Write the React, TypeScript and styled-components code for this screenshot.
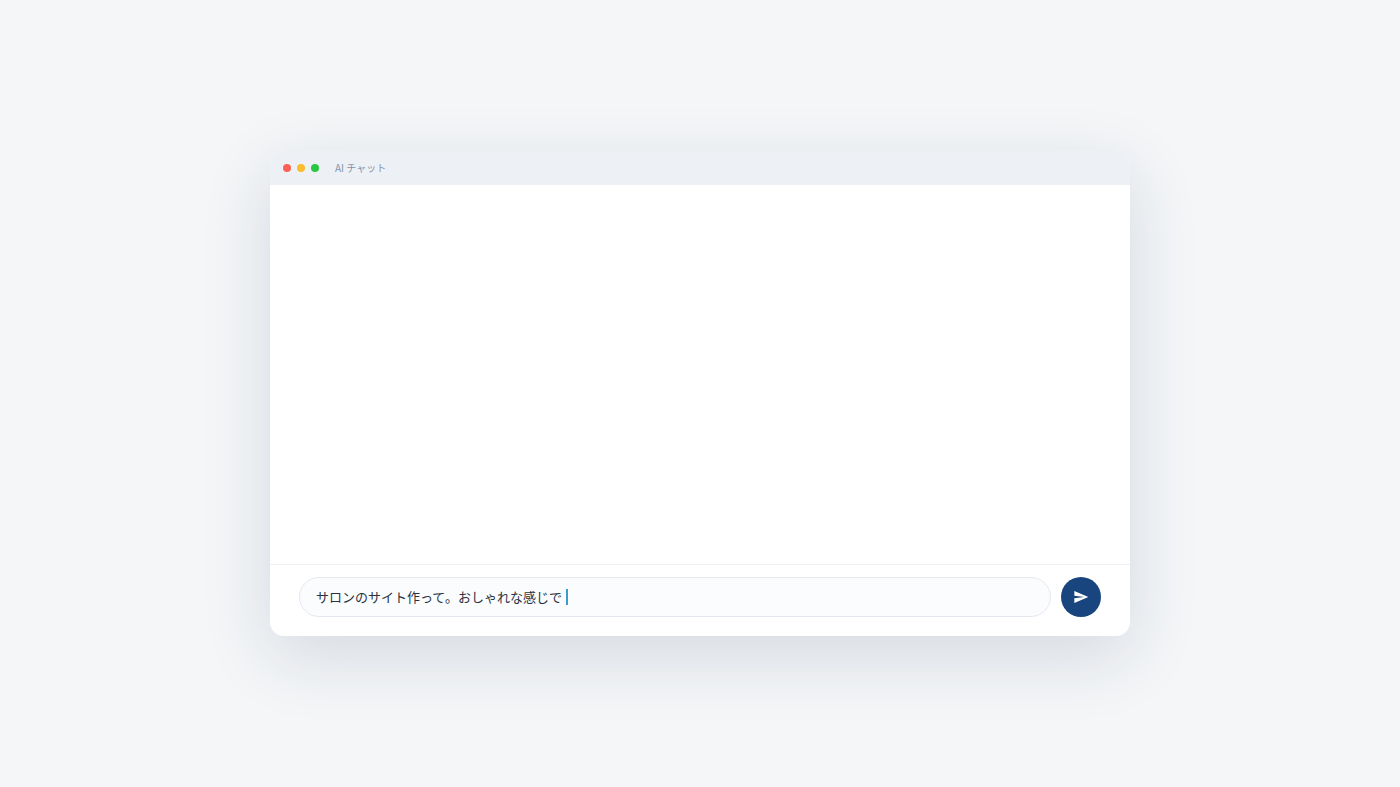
import React, { useState } from "react";
import styled, { createGlobalStyle } from "styled-components";

const GlobalStyle = createGlobalStyle`
  *, *::before, *::after { box-sizing: border-box; }
  body {
    margin: 0;
    background: #f4f6f8;
    font-family: "Noto Sans CJK JP", sans-serif;
  }
`;

const Page = styled.main`
  min-height: 100vh;
  display: flex;
  align-items: center;
  justify-content: center;
  padding: 24px;
`;

const Window = styled.section`
  width: 100%;
  max-width: 860px;
  display: flex;
  flex-direction: column;
  background: #ffffff;
  border-radius: 14px;
  overflow: hidden;
  box-shadow: 0 20px 70px rgba(26, 46, 78, 0.14);
`;

const TitleBar = styled.header`
  display: flex;
  align-items: center;
  gap: 16px;
  height: 34px;
  padding: 0 13px;
  background: #edf1f6;
`;

const Lights = styled.div`
  display: flex;
  gap: 6px;
`;

const Light = styled.span<{ $color: string }>`
  width: 8px;
  height: 8px;
  border-radius: 50%;
  background: ${({ $color }) => $color};
`;

const Title = styled.h1`
  margin: 0;
  font-size: 10px;
  line-height: 16px;
  font-weight: 400;
  color: #8493a8;
`;

const Messages = styled.div`
  min-height: 379px;
`;

const Composer = styled.form`
  display: flex;
  align-items: center;
  gap: 10px;
  padding: 12px 29px 19px;
  border-top: 1px solid #edf1f6;
`;

const Field = styled.label`
  flex: 1;
  min-width: 0;
  display: flex;
  align-items: center;
  gap: 4px;
  height: 40px;
  padding: 0 16px;
  border: 1px solid #e3e8ef;
  border-radius: 20px;
  background: #fafcfe;
`;

const TextInput = styled.input`
  field-sizing: content;
  min-width: 0;
  padding: 0;
  border: 0;
  outline: 0;
  background: transparent;
  font-family: inherit;
  font-size: 13px;
  line-height: 20px;
  color: #29323e;
  caret-color: transparent;
`;

const Caret = styled.span`
  flex: none;
  width: 2px;
  height: 16px;
  background: #3f9bce;
`;

const SendButton = styled.button`
  flex: none;
  display: flex;
  align-items: center;
  justify-content: center;
  width: 40px;
  height: 40px;
  padding: 0;
  border: 0;
  border-radius: 50%;
  background: #18457d;
  color: #ffffff;
  cursor: pointer;
`;

const lights = ["#fc5f57", "#fdbb2e", "#28c840"];

export default function App() {
  const [message, setMessage] = useState("サロンのサイト作って。おしゃれな感じで");

  return (
    <>
      <GlobalStyle />
      <Page>
        <Window>
          <TitleBar>
            <Lights>
              {lights.map((color) => (
                <Light key={color} $color={color} />
              ))}
            </Lights>
            <Title>AI チャット</Title>
          </TitleBar>
          <Messages />
          <Composer onSubmit={(event) => event.preventDefault()}>
            <Field>
              <TextInput
                type="text"
                aria-label="メッセージ"
                value={message}
                onChange={(event) => setMessage(event.target.value)}
              />
              <Caret />
            </Field>
            <SendButton type="submit" aria-label="送信">
              <svg width="16" height="16" viewBox="0 0 24 24" fill="currentColor" aria-hidden="true">
                <path d="M2 21 23 12 2 3v7l15 2-15 2z" />
              </svg>
            </SendButton>
          </Composer>
        </Window>
      </Page>
    </>
  );
}
